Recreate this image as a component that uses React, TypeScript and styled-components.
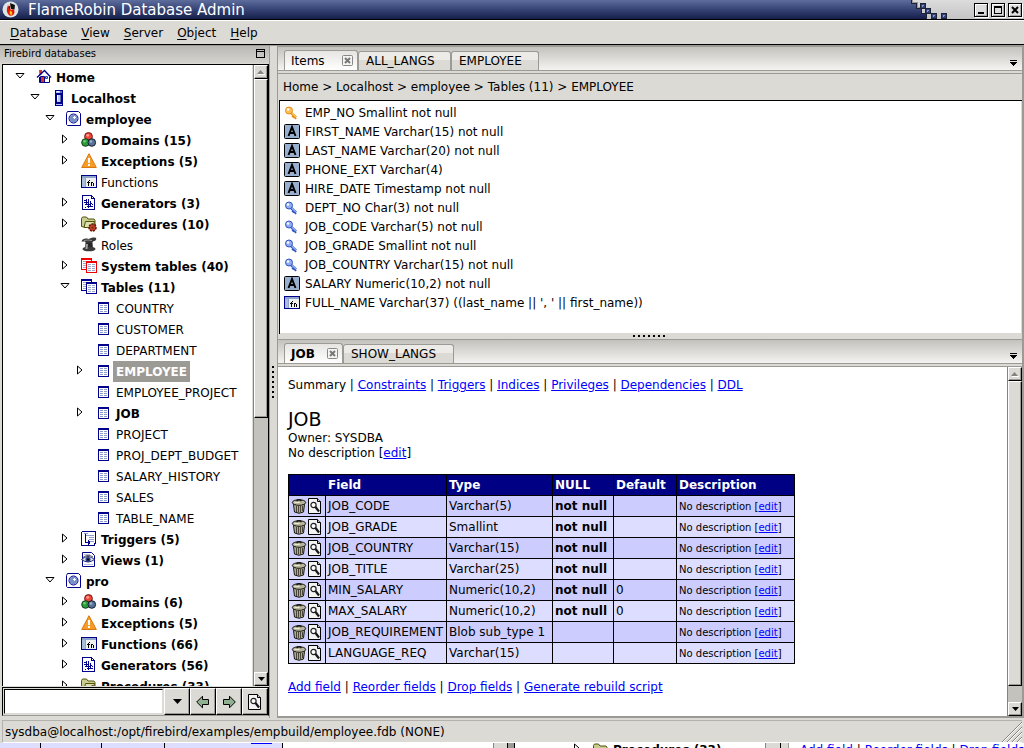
import React from "react";
import styled, { createGlobalStyle, css } from "styled-components";

const face = "#dcdad5";
const shade = "#9c9a94";
const trough = "#c4c2bd";

const GlobalStyle = createGlobalStyle`
  * { box-sizing: border-box; }
  html, body { margin: 0; padding: 0; }
  body {
    background: ${face};
    color: #000;
    font-family: "DejaVu Sans", Verdana, sans-serif;
    font-size: 12px;
    line-height: 15px;
  }
  button, input { font: inherit; color: inherit; margin: 0; padding: 0; border: 0; border-radius: 0; background: none; outline: 0; }
  svg { display: block; flex: none; }
  a { color: #0000ff; }
`;

/* ---------- window frame ---------- */

const Window = styled.div`
  display: flex;
  flex-direction: column;
  height: 100vh;
  overflow: hidden;
`;

const TitleBar = styled.header`
  flex: none;
  display: flex;
  align-items: center;
  height: 20px;
  padding-left: 2px;
  border-bottom: 1px solid #000;
  background: linear-gradient(#5d6d9c, #3a4779 45%, #161f4a);
  color: #fff;
`;

const Title = styled.h1`
  flex: 1;
  margin: 0;
  padding-left: 9px;
  font-size: 15px;
  font-weight: 400;
  line-height: 18px;
`;

const WindowButtons = styled.div`
  display: flex;
  align-items: center;
  gap: 3px;
  height: 19px;
  padding: 0 2px 0 23px;
  background: linear-gradient(#dcdcdc, #c4c4c4);
`;

const WindowButton = styled.button`
  display: grid;
  place-items: center;
  width: 14px;
  height: 14px;
  border: 1px solid #000;
  box-shadow: inset 1px 1px #fff, inset -1px -1px #aaa, 1px 1px #fff;
  background: #dedede;
`;

const MenuBar = styled.nav`
  flex: none;
  display: flex;
  height: 25px;
  padding: 0 3px;
  border-top: 1px solid #fff;
  border-bottom: 1px solid #000;
  background: ${face};
`;

const MenuItem = styled.button`
  padding: 1px 7px 0 7px;
  line-height: 22px;
  & u { text-underline-offset: 2px; }
`;

const Workspace = styled.main`
  flex: 1;
  min-height: 0;
  display: flex;
  border-top: 1px solid ${shade};
`;

/* ---------- scroll bars ---------- */

const ScrollTrack = styled.div`
  flex: none;
  display: flex;
  flex-direction: column;
  width: 15px;
  border-left: 1px solid #85837e;
  background: ${trough};
`;

const raised = css`
  border: 1px solid;
  border-color: #fff #000 #000 #fff;
  box-shadow: inset -1px -1px ${shade};
  background: ${face};
`;

const ScrollButton = styled.button`
  ${raised}
  flex: none;
  display: grid;
  place-items: center;
  height: 14px;
`;

const ScrollThumb = styled.div<{ $share: number }>`
  ${raised}
  flex: ${(p) => p.$share} 0 0;
`;

const ScrollRest = styled.div<{ $share: number }>`
  flex: ${(p) => p.$share} 0 0;
`;

function ScrollBar({ thumb, label }: { thumb: number; label: string }) {
  return (
    <ScrollTrack>
      <ScrollButton aria-label={`${label}: scroll up`}>
        <svg width="8" height="5" viewBox="0 0 8 5"><path d="M0 4 3.5 0 7 4z" fill="#85837e" /><path d="M1 4.5h7" stroke="#fff" /></svg>
      </ScrollButton>
      <ScrollThumb $share={thumb} />
      <ScrollRest $share={100 - thumb} />
      <ScrollButton aria-label={`${label}: scroll down`}>
        <svg width="7" height="4" viewBox="0 0 7 4"><path d="M0 0h7L3.5 4z" /></svg>
      </ScrollButton>
    </ScrollTrack>
  );
}

/* ---------- icons ---------- */

const icon = { width: 16, height: 16, viewBox: "0 0 16 16" };
const crisp = { ...icon, shapeRendering: "crispEdges" as const };

const icons = {
  home: (
    <svg {...icon}>
      <path d="M3 7 8.500 2 13.500 7v6.500h-10z" fill="#fff" />
      <path d="M3 1h3v4L3.500 7z" fill="#d83820" />
      <path d="M5 8h3v5H5z" fill="#d83820" />
      <path d="M3.500 8v5.500h10V8M8.500 13V7.500h-4V13" fill="none" stroke="#00008c" />
      <path d="M1 8.500 8.500 1.500 15 8.500" fill="none" stroke="#00008c" strokeWidth="1.300" />
      <path d="M9.500 7.500h2v2h-2z" fill="#a8c0e8" stroke="#2c489c" />
    </svg>
  ),
  server: (
    <svg {...crisp}>
      <path d="M4 0h8v4h-1v9h1v3H4v-3h1V4H4z" fill="#00008c" />
      <path d="M4 3h1v10H4zM11 3h1v10h-1z" fill="#00008c" />
      <path d="M5 1h6v2H5zM6 5h4v7H6zM5 14h6v1H5z" fill="#b8c8f0" />
      <path d="M9 5h1v7H9zM9 1h2v2H9z" fill="#5870b8" />
      <path d="M6 1h2v1H6zM6 5h1v6H6z" fill="#fff" />
    </svg>
  ),
  database: (
    <svg {...icon}>
      <path d="M1.500.500h11l2 2v12h-13l-1-1v-11z" fill="#fff" stroke="#00008c" />
      <circle cx="7.500" cy="7.500" r="4.500" fill="#c8d4f0" stroke="#00008c" />
      <circle cx="7.500" cy="7.500" r="3.800" fill="#7890c8" />
      <path d="M7 6.500h3M8.500 5v3" stroke="#fff" />
    </svg>
  ),
  domains: (
    <svg {...icon}>
      <circle cx="7.500" cy="4.500" r="3.900" fill="#ee4638" stroke="#701812" />
      <circle cx="4.500" cy="10.500" r="3.800" fill="#28a038" stroke="#103c18" />
      <circle cx="10.800" cy="10.500" r="3.800" fill="#587294" stroke="#101c30" />
      <circle cx="6.700" cy="3.300" r="1.400" fill="#ff9c90" />
      <circle cx="3.500" cy="9.300" r="1.200" fill="#70d078" />
      <circle cx="10" cy="9.500" r="1.200" fill="#9cb4d0" />
    </svg>
  ),
  exceptions: (
    <svg {...icon}>
      <path d="M8 .700 15.300 14.500H.7z" fill="#f89c28" stroke="#d87810" strokeLinejoin="round" />
      <path d="M8 5v5M8 11v2" stroke="#fff" strokeWidth="2" />
    </svg>
  ),
  fn: (
    <svg {...crisp}>
      <path d="M0 1h16v13H0z" fill="#00008c" />
      <path d="M1 2h14v11H1z" fill="#8ca4cc" />
      <path d="M1 4h3v9H1z" fill="#a8bcdc" />
      <path d="M5 4h10v9H5z" fill="#f0f0ee" />
      <path d="M7.500 7v5M6 8.500h3M8 6.500h1M10.500 8v4M11 8.500h1M12.500 9v3" stroke="#000" fill="none" />
    </svg>
  ),
  generators: (
    <svg {...crisp}>
      <path d="M1.500.500h9l3 3v11h-12z" fill="#fff" stroke="#00008c" />
      <path d="M10.500 0v3.500H14" fill="none" stroke="#00008c" />
      <path d="M3 5h2v1H3zM5 4h1v5H5zM3 7h5v1H3zM7 4h1v5H7zM4 9h6v1H4zM7 8h1v5H7zM9 6h1v6H9zM6 11h6v1H6zM9 8h2v1H9zM11 9h1v1h-1zM4 12h1v1H4z" fill="#00008c" />
    </svg>
  ),
  procedures: (
    <svg {...icon}>
      <path d="M.500 10.500v-8l1-1.500h4l1.500 2h6l1 1.500V11H3z" fill="#c8cc90" stroke="#505408" />
      <path d="m3 11.500 1.500-6h9L12 11.500z" fill="#dce0b0" stroke="#505408" />
      <circle cx="11.500" cy="11.500" r="3.500" fill="#c04028" stroke="#601808" strokeWidth="1.600" strokeDasharray="2 1" />
      <circle cx="11.500" cy="11.500" r="1" fill="#802010" />
    </svg>
  ),
  roles: (
    <svg {...icon}>
      <path d="M.500 4.500c1-3 4-3.500 7-2.500C10 1 13 0 15 1c1 2-1 3-3 3.500l-1 2H5l-1-2z" fill="#383838" />
      <path d="M3 3.500q4-1 8 0" stroke="#909090" fill="none" />
      <path d="M4.500 6h7l.500 6h-8z" fill="#282828" />
      <ellipse cx="8" cy="12" rx="6.500" ry="2.300" fill="#3c3c3c" />
      <path d="M5 7 4.500 12h2L7 7z" fill="#a0a0a0" />
    </svg>
  ),
  systemTables: <StackedTables color="#f00000" />,
  tables: <StackedTables color="#00008c" />,
  table: (
    <svg {...crisp}>
      <path d="M2 2h11v12H2z" fill="#00008c" />
      <path d="M3 4h9v9H3z" fill="#fff" />
      <path d="M4 5.500h7M4 7.500h7M4 9.500h7M4 11.500h7" stroke="#8c9cc8" strokeDasharray="3 1" />
    </svg>
  ),
  triggers: (
    <svg {...crisp}>
      <path d="M1.500.500h13v12h-1v2H.500v-13z" fill="#fff" stroke="#00008c" />
      <path d="M3 2.500h4M5 4.500h8M8 6.500h5M8 8.500h5M9 10.500h4" stroke="#8c9cd0" />
      <path d="M4.500 3v8.500H9M7.500 9v5M8.500 10v3" stroke="#00008c" fill="none" />
    </svg>
  ),
  views: (
    <svg {...icon}>
      <path d="M1.500.500h9l3 3v11h-12z" fill="#fff" stroke="#00008c" />
      <path d="M3 2.500h6M3 12.500h9" stroke="#b0bce0" />
      <path d="M.500 7.500Q7 1.500 13.500 7.500 7 12.500 .500 7.500z" fill="#d8dcec" stroke="#283070" />
      <circle cx="7" cy="7.500" r="2.500" fill="#283c80" /><circle cx="7" cy="7.500" r="1" fill="#000" />
      <path d="M2 5.500Q7 1.500 12 5" stroke="#585858" fill="none" />
    </svg>
  ),
  key: <Key light="#ffc058" dark="#e88c10" />,
  foreignKey: <Key light="#90acf4" dark="#3054c0" />,
  column: (
    <svg {...icon}>
      <rect x=".500" y=".500" width="15" height="14" rx="1" fill="#98b0d0" stroke="#000" />
      <path d="M4.500 12 8 3l3.500 9M6 9h4" stroke="#000" strokeWidth="2" fill="none" />
    </svg>
  ),
};

type IconName = keyof typeof icons;

function StackedTables({ color }: { color: string }) {
  return (
    <svg {...crisp}>
      <path d="M0 0h11v12H0z" fill={color} /><path d="M1 2h9v9H1z" fill="#fff" />
      <path d="M2 3.500h7M2 5.500h7M2 7.500h7M2 9.500h7" stroke="#98a4cc" strokeDasharray="3 1" />
      <path d="M5 3h11v12H5z" fill={color} /><path d="M6 5h9v9H6z" fill="#fff" />
      <path d="M7 6.500h7M7 8.500h7M7 10.500h7M7 12.500h7" stroke="#98a4cc" strokeDasharray="3 1" />
    </svg>
  );
}

function Key({ light, dark }: { light: string; dark: string }) {
  return (
    <svg {...icon}>
      <path d="m6 7 6 5.500M10 10.500l-1.500 1.800M12 12.500l-1.500 1" stroke={dark} strokeWidth="2.600" />
      <path d="m6 6.500 6 5.500" stroke={light} strokeWidth="1.500" />
      <circle cx="5" cy="5.500" r="3.500" fill={light} stroke={dark} />
      <circle cx="4" cy="4.500" r="1.200" fill="#fff" />
    </svg>
  );
}

const TrashIcon = () => (
  <svg {...icon}>
    <path d="M2.500 6.500h11l-1 7.500q-4.500 2.500-9 0z" fill="#b0ac94" stroke="#181810" />
    <path d="M5.500 8v6M7.500 8v6.500M9.500 8v6.500M11.500 8v5" stroke="#484438" />
    <ellipse cx="8" cy="4.500" rx="6.700" ry="2.800" fill="#b8b49c" stroke="#181810" />
    <path d="M5.500 3Q8 .500 10.500 3" fill="none" stroke="#181810" strokeWidth="1.500" />
    <path d="M3.500 4.500h5" stroke="#ecead8" />
  </svg>
);

const FindIcon = () => (
  <svg {...icon}>
    <path d="M1.500.500h9l3 3v12h-12z" fill="#f4f4f4" stroke="#000" />
    <path d="M10.500.500v3h3" fill="#c8c8c8" stroke="#000" />
    <circle cx="6.500" cy="7" r="2.600" fill="#fff" stroke="#202020" strokeWidth="1.200" />
    <path d="m8.500 9 3.500 4.500" stroke="#181818" strokeWidth="2.200" />
  </svg>
);

const RobinIcon = () => (
  <svg width="17" height="17" viewBox="0 0 17 17">
    <circle cx="8.500" cy="8.500" r="8" fill="#dce4e4" />
    <path d="M8 2 13 4 12.500 8.500 9 8z" fill="#101010" />
    <path d="M6 4c-1 3-2.500 7 1.500 10.500 5 1 6-4 4-6.500L9 9z" fill="#e81808" />
    <path d="M8.500 9.500c-1.500 1.500-1 4 .500 4.500 2-.500 1.500-3-.500-4.500z" fill="#ffc810" />
    <path d="M6.500 6 8 8.500 8.500 4z" fill="#501010" />
  </svg>
);

const TitleDither = () => (
  <svg width="44" height="19" viewBox="0 0 44 19" shapeRendering="crispEdges">
    <defs>
      <linearGradient id="frameLight" x1="0" y1="0" x2="0" y2="1">
        <stop offset="0" stopColor="#dcdcdc" /><stop offset="1" stopColor="#c4c4c4" />
      </linearGradient>
    </defs>
    <path d="M4 0h40v19H19v-5h-5V8H9V3H4z" fill="url(#frameLight)" />
    <path d="M4.500 0v3.500h5v5h5v5h5V19" fill="none" stroke="#1c2238" />
    <path d="M5.500 0v2.500h5v5h3" fill="none" stroke="#9a9a9a" />
    <path d="M13.500 3.500h5v5h-5zM18.500 8.500h5v5h-5zM24.500 13.500h5v5h-5zM34.500 13.500h5v5h-5z" fill="#32407a" stroke="#1c2238" />
    <path d="M15 7V5h2M20 12v-2h2M26 17v-2h2M36 17v-2h2" fill="none" stroke="#8c9cc4" />
  </svg>
);

const ChevronBar = () => (
  <svg width="8" height="6" viewBox="0 0 8 6" shapeRendering="crispEdges"><path d="M0 0h7v1H0zM0 2h7v1H6v1H5v1H4v1H3V5H2V4H1V3H0z" /></svg>
);

/* ---------- left: database tree ---------- */

const SidePane = styled.aside`
  flex: none;
  display: flex;
  flex-direction: column;
  width: 270px;
  padding: 0 0 2px 2px;
  border-right: 1px solid ${shade};
`;

const PaneCaption = styled.div`
  flex: none;
  display: flex;
  align-items: center;
  justify-content: space-between;
  height: 18px;
  margin-left: -2px;
  padding: 0 4px 2px;
  border-bottom: 1px solid ${face};
  background: linear-gradient(#bab9b5, #d4d2cd);
  font-size: 10px;
`;

const TreeFrame = styled.div`
  flex: 1;
  min-height: 0;
  display: flex;
  border: 1px solid #000;
  border-width: 1px 1px 0 1px;
  background: #fff;
`;

const Tree = styled.ul`
  flex: 1;
  min-width: 0;
  margin: 0;
  padding: 2px 0 0;
  overflow: hidden;
  list-style: none;
  border-right: 1px solid ${face};
`;

const TreeRow = styled.li<{ $depth: number }>`
  display: flex;
  height: 21px;
  padding-left: ${(p) => 9 + 15 * p.$depth}px;
  & > svg { margin-top: 2px; }
`;

const Expander = styled.button`
  display: grid;
  place-items: center;
  flex: none;
  width: 16px;
  height: 17px;
  margin-right: 8px;
`;

const NodeLabel = styled.span<{ $bold?: boolean; $selected?: boolean }>`
  margin-left: 1px;
  padding: 1px 3px 0;
  line-height: 20px;
  white-space: nowrap;
  font-weight: ${(p) => (p.$bold ? 700 : 400)};
  ${(p) => p.$selected && css`background: #9c9a94; color: #fff;`}
`;

type Node = { depth: number; icon: IconName; label: string; bold?: boolean; open?: boolean; branch?: boolean; selected?: boolean };

const leaf = (label: string): Node => ({ depth: 4, icon: "table", label });
const group = (icon: IconName, label: string, open = false): Node => ({ depth: 3, icon, label, bold: true, branch: true, open });

const nodes: Node[] = [
  { depth: 0, icon: "home", label: "Home", bold: true, branch: true, open: true },
  { depth: 1, icon: "server", label: "Localhost", bold: true, branch: true, open: true },
  { depth: 2, icon: "database", label: "employee", bold: true, branch: true, open: true },
  group("domains", "Domains (15)"),
  group("exceptions", "Exceptions (5)"),
  { depth: 3, icon: "fn", label: "Functions" },
  group("generators", "Generators (3)"),
  group("procedures", "Procedures (10)"),
  { depth: 3, icon: "roles", label: "Roles" },
  group("systemTables", "System tables (40)"),
  group("tables", "Tables (11)", true),
  leaf("COUNTRY"),
  leaf("CUSTOMER"),
  leaf("DEPARTMENT"),
  { ...leaf("EMPLOYEE"), bold: true, branch: true, selected: true },
  leaf("EMPLOYEE_PROJECT"),
  { ...leaf("JOB"), bold: true, branch: true },
  leaf("PROJECT"),
  leaf("PROJ_DEPT_BUDGET"),
  leaf("SALARY_HISTORY"),
  leaf("SALES"),
  leaf("TABLE_NAME"),
  group("triggers", "Triggers (5)"),
  group("views", "Views (1)"),
  { depth: 2, icon: "database", label: "pro", bold: true, branch: true, open: true },
  group("domains", "Domains (6)"),
  group("exceptions", "Exceptions (5)"),
  group("fn", "Functions (66)"),
  group("generators", "Generators (56)"),
  group("procedures", "Procedures (33)"),
];

const SearchRow = styled.form`
  flex: none;
  display: flex;
  height: 29px;
  margin-top: 1px;
  border: 1px solid #000;
  border-bottom-color: ${shade};
  background: ${face};
`;

const SearchBox = styled.input`
  flex: 1;
  min-width: 0;
  margin: 1px;
  padding: 0 4px;
  border: 1px solid #000;
  border-color: #000 ${face} ${face} #000;
  background: #fff;
`;

const ToolButton = styled.button`
  ${raised}
  display: grid;
  place-items: center;
  width: 26px;
`;

/* ---------- right: notebooks ---------- */

const Sash = styled.div<{ $vertical?: boolean }>`
  flex: none;
  display: grid;
  place-items: center;
  ${(p) => (p.$vertical ? "width: 7px;" : "height: 5px;")}
  background: ${face};
`;

const Notebooks = styled.div`
  flex: 1;
  min-width: 0;
  display: flex;
  flex-direction: column;
  border: 1px solid ${shade};
  border-width: 0 2px 2px 1px;
`;

const Notebook = styled.section<{ $fill?: boolean }>`
  display: flex;
  flex-direction: column;
  ${(p) => (p.$fill ? "flex: 1; min-height: 0;" : "flex: none; height: 288px;")}
`;

const TabBar = styled.div`
  flex: none;
  display: flex;
  align-items: flex-end;
  height: 25px;
  padding-left: 6px;
  border-top: 1px solid ${shade};
  border-bottom: 1px solid ${shade};
  background: linear-gradient(#c4c2bd, #f4f3f1);
`;

const Tab = styled.button<{ $active?: boolean; $width: number }>`
  display: flex;
  align-items: center;
  justify-content: space-between;
  width: ${(p) => p.$width}px;
  height: ${(p) => (p.$active ? 20 : 19)}px;
  padding: 1px 3px 0 ${(p) => (p.$active ? 6 : 7)}px;
  border: 1px solid ${shade};
  border-bottom: 0;
  border-radius: 3px 3px 0 0;
  background: ${(p) => (p.$active ? "linear-gradient(#e6e5e2, #fff)" : "linear-gradient(#ecebe8 45%, #dcdad5 45%)")};
`;

const TabMenu = styled.button`
  width: 12px;
  height: 15px;
  margin-left: auto;
`;

const CloseIcon = () => (
  <svg width="12" height="12" viewBox="0 0 12 12"><rect x=".500" y=".500" width="10" height="10" rx="1" fill="#f4f4f2" stroke="#888" /><path d="m3 3 5 5M8 3 3 8" stroke="#777" strokeWidth="2" /></svg>
);

const TabLine = styled.div`
  flex: none;
  height: 3px;
  border-bottom: 1px solid ${shade};
  background: ${face};
`;

const Breadcrumb = styled.div`
  flex: none;
  height: 26px;
  padding: 0 5px;
  line-height: 26px;
`;

const ColumnList = styled.ul`
  flex: 1;
  margin: 0 0 0 1px;
  padding: 3px 4px;
  overflow: hidden;
  list-style: none;
  border: 1px solid #000;
  border-width: 1px 0 0 1px;
  box-shadow: inset -1px -1px ${face};
  background: #fff;
`;

const ColumnItem = styled.li`
  display: flex;
  gap: 5px;
  height: 19px;
  line-height: 19px;
  & > svg { margin-top: 1px; }
`;

const Report = styled.div`
  flex: 1;
  min-height: 0;
  display: flex;
  background: #fff;
`;

const ReportBody = styled.article`
  flex: 1;
  min-width: 0;
  padding: 11px 10px 10px;
  overflow: hidden;
`;

const LinkLine = styled.p`
  margin: 0;
`;

const Heading = styled.h2`
  margin: 14px 0 0;
  font-size: 19px;
  font-weight: 400;
  line-height: 24px;
`;

const FieldTable = styled.table`
  margin: 13px 0 16px;
  border-collapse: collapse;
  td, th {
    height: 21px;
    padding: 0 2px;
    border: 1px solid #000;
    text-align: left;
    white-space: nowrap;
  }
  th { background: #000084; color: #fff; }
  tbody tr:nth-child(odd) { background: #ccccff; }
  tbody tr:nth-child(even) { background: #ddddff; }
`;

const Col = styled.col<{ $width: number }>`
  width: ${(p) => p.$width}px;
`;

const Actions = styled.div`
  display: flex;
`;

const SmallCell = styled.td`
  font-size: 10px;
`;

const columns: [IconName, string][] = [
  ["key", "EMP_NO Smallint not null"],
  ["column", "FIRST_NAME Varchar(15) not null"],
  ["column", "LAST_NAME Varchar(20) not null"],
  ["column", "PHONE_EXT Varchar(4)"],
  ["column", "HIRE_DATE Timestamp not null"],
  ["foreignKey", "DEPT_NO Char(3) not null"],
  ["foreignKey", "JOB_CODE Varchar(5) not null"],
  ["foreignKey", "JOB_GRADE Smallint not null"],
  ["foreignKey", "JOB_COUNTRY Varchar(15) not null"],
  ["column", "SALARY Numeric(10,2) not null"],
  ["fn", "FULL_NAME Varchar(37) ((last_name || ', ' || first_name))"],
];

const fields: [string, string, boolean, string][] = [
  ["JOB_CODE", "Varchar(5)", true, ""],
  ["JOB_GRADE", "Smallint", true, ""],
  ["JOB_COUNTRY", "Varchar(15)", true, ""],
  ["JOB_TITLE", "Varchar(25)", true, ""],
  ["MIN_SALARY", "Numeric(10,2)", true, "0"],
  ["MAX_SALARY", "Numeric(10,2)", true, "0"],
  ["JOB_REQUIREMENT", "Blob sub_type 1", false, ""],
  ["LANGUAGE_REQ", "Varchar(15)", false, ""],
];

const Links = ({ items }: { items: string[] }) => (
  <>
    {items.map((item, i) => (
      <React.Fragment key={item}>{i > 0 && " | "}<a href="#">{item}</a></React.Fragment>
    ))}
  </>
);

/* ---------- bottom ---------- */

const StatusBar = styled.footer`
  flex: none;
  display: flex;
  justify-content: space-between;
  align-items: flex-end;
  height: 23px;
  margin: 2px 2px 0;
  padding-left: 2px;
  border-top: 1px solid #b4b2ad;
  border-left: 1px solid #b4b2ad;
  border-bottom: 1px solid #fff;
  line-height: 20px;
`;

/* A sliver of the window lying behind this one */
const Behind = styled.div`
  flex: none;
  display: flex;
  height: 5px;
  overflow: hidden;
`;

const BehindCell = styled.div<{ $width?: number; $bg: string; $edge?: string; $end?: boolean }>`
  display: flex;
  align-items: flex-start;
  justify-content: ${(p) => (p.$end ? "flex-end" : "flex-start")};
  ${(p) => (p.$width ? `flex: none; width: ${p.$width}px;` : "flex: 1; min-width: 0;")}
  overflow: hidden;
  white-space: nowrap;
  background: ${(p) => p.$bg};
  border-right: ${(p) => (p.$edge ? `1px solid ${p.$edge}` : "0")};
`;

const UnderlineTail = styled.span`
  width: 21px;
  height: 1px;
  margin-right: 10px;
  background: #0000ff;
`;

const BehindLabel = styled.span<{ $bold?: boolean }>`
  padding: 0 ${(p) => (p.$bold ? 4 : 11)}px;
  font-weight: ${(p) => (p.$bold ? 700 : 400)};
`;

export default function App() {
  return (
    <Window>
      <GlobalStyle />
      <TitleBar>
        <RobinIcon />
        <Title>FlameRobin Database Admin</Title>
        <TitleDither />
        <WindowButtons>
          <WindowButton aria-label="Minimize"><svg width="8" height="8" viewBox="0 0 8 8"><path d="M1 6h6v2H1z" /></svg></WindowButton>
          <WindowButton aria-label="Maximize"><svg width="8" height="8" viewBox="0 0 8 8"><path d="M0 0h8v8H0zM1 2v5h6V2z" fillRule="evenodd" /></svg></WindowButton>
          <WindowButton aria-label="Close"><svg width="8" height="8" viewBox="0 0 8 8"><path d="m1 1 6 6M7 1 1 7" stroke="#000" strokeWidth="2" /></svg></WindowButton>
        </WindowButtons>
      </TitleBar>
      <MenuBar>
        {["Database", "View", "Server", "Object", "Help"].map((m) => (
          <MenuItem key={m}><u>{m[0]}</u>{m.slice(1)}</MenuItem>
        ))}
      </MenuBar>

      <Workspace>
        <SidePane>
          <PaneCaption>
            Firebird databases
            <svg width="9" height="9" viewBox="0 0 9 9" shapeRendering="crispEdges"><path d="M.500.500h8v8h-8zM0 2.500h9" fill="none" stroke="#000" /></svg>
          </PaneCaption>
          <TreeFrame>
            <Tree>
              {nodes.map((n, i) => (
                <TreeRow key={i} $depth={n.depth}>
                  <Expander aria-label={n.branch ? `Toggle ${n.label}` : undefined} disabled={!n.branch}>
                    {n.branch && (
                      n.open
                        ? <svg width="10" height="6" viewBox="0 0 10 6"><path d="M1 .500h8L5 5z" fill="#fff" stroke="#000" /></svg>
                        : <svg width="6" height="10" viewBox="0 0 6 10"><path d="M.500 1v8L5 5z" fill="#fff" stroke="#000" /></svg>
                    )}
                  </Expander>
                  {icons[n.icon]}
                  <NodeLabel $bold={n.bold} $selected={n.selected}>{n.label}</NodeLabel>
                </TreeRow>
              ))}
            </Tree>
            <ScrollBar thumb={57} label="Databases" />
          </TreeFrame>
          <SearchRow>
            <SearchBox aria-label="Search" />
            <ToolButton type="button" aria-label="Recent searches"><svg width="9" height="5" viewBox="0 0 9 5"><path d="M0 0h9L4.500 5z" /></svg></ToolButton>
            <ToolButton type="button" aria-label="Previous"><svg width="14" height="14" viewBox="0 0 14 14"><path d="M.700 7 6.500 1.200V4.500h6v5h-6v3.300z" fill="#90b090" stroke="#000" /></svg></ToolButton>
            <ToolButton type="button" aria-label="Next"><svg width="14" height="14" viewBox="0 0 14 14"><path d="M13.300 7 7.500 1.200V4.500h-6v5h6v3.300z" fill="#90b090" stroke="#000" /></svg></ToolButton>
            <ToolButton type="button" aria-label="Advanced search"><FindIcon /></ToolButton>
          </SearchRow>
        </SidePane>

        <Sash $vertical>
          <svg width="3" height="32" viewBox="0 0 3 32" shapeRendering="crispEdges"><path d="M1 0v32" stroke="#000" strokeWidth="2" strokeDasharray="2 3" /></svg>
        </Sash>

        <Notebooks>
          <Notebook>
            <TabBar>
              <Tab $active $width={74}>Items<CloseIcon /></Tab>
              <Tab $width={93}>ALL_LANGS</Tab>
              <Tab $width={88}>EMPLOYEE</Tab>
              <TabMenu aria-label="List tabs"><ChevronBar /></TabMenu>
            </TabBar>
            <TabLine />
            <Breadcrumb>Home &gt; Localhost &gt; employee &gt; Tables (11) &gt; EMPLOYEE</Breadcrumb>
            <ColumnList>
              {columns.map(([name, text]) => (
                <ColumnItem key={text}>{icons[name]}{text}</ColumnItem>
              ))}
            </ColumnList>
          </Notebook>

          <Sash>
            <svg width="34" height="3" viewBox="0 0 34 3" shapeRendering="crispEdges"><path d="M0 1h34" stroke="#000" strokeWidth="2" strokeDasharray="2 3" /></svg>
          </Sash>

          <Notebook $fill>
            <TabBar>
              <Tab $active $width={59}><b>JOB</b><CloseIcon /></Tab>
              <Tab $width={111}>SHOW_LANGS</Tab>
              <TabMenu aria-label="List tabs"><ChevronBar /></TabMenu>
            </TabBar>
            <TabLine />
            <Report>
              <ReportBody>
                <LinkLine>Summary | <Links items={["Constraints", "Triggers", "Indices", "Privileges", "Dependencies", "DDL"]} /></LinkLine>
                <Heading>JOB</Heading>
                <LinkLine>Owner: SYSDBA</LinkLine>
                <LinkLine>No description [<a href="#">edit</a>]</LinkLine>
                <FieldTable>
                  <colgroup>
                    <Col $width={37} /><Col $width={121} /><Col $width={106} /><Col $width={61} /><Col $width={63} /><Col $width={118} />
                  </colgroup>
                  <thead>
                    <tr><th aria-label="Actions" /><th>Field</th><th>Type</th><th>NULL</th><th>Default</th><th>Description</th></tr>
                  </thead>
                  <tbody>
                    {fields.map(([name, type, notNull, def]) => (
                      <tr key={name}>
                        <td>
                          <Actions>
                            <a href="#" aria-label={`Drop ${name}`}><TrashIcon /></a>
                            <a href="#" aria-label={`Properties of ${name}`}><FindIcon /></a>
                          </Actions>
                        </td>
                        <td>{name}</td>
                        <td>{type}</td>
                        <td><b>{notNull ? "not null" : ""}</b></td>
                        <td>{def}</td>
                        <SmallCell>No description [<a href="#">edit</a>]</SmallCell>
                      </tr>
                    ))}
                  </tbody>
                </FieldTable>
                <LinkLine><Links items={["Add field", "Reorder fields", "Drop fields", "Generate rebuild script"]} /></LinkLine>
              </ReportBody>
              <ScrollBar thumb={95} label="Report" />
            </Report>
          </Notebook>
        </Notebooks>
      </Workspace>

      <StatusBar>
        sysdba@localhost:/opt/firebird/examples/empbuild/employee.fdb (NONE)
        <svg width="20" height="20" viewBox="0 0 20 20">
          <path d="M1 20 20 1M6 20 20 6M11 20l9-9M16 20l4-4" stroke="#fff" />
          <path d="M0 20 20 0M5 20 20 5M10 20l10-10M15 20l5-5" stroke="#85837e" />
        </svg>
      </StatusBar>

      <Behind aria-hidden="true">
        <BehindCell $width={41} $bg="#ddddff" $edge="#000" />
        <BehindCell $width={61} $bg="#ddddff" $edge="#000" />
        <BehindCell $width={63} $bg="#ddddff" $edge="#000" />
        <BehindCell $width={118} $bg="#ddddff" $edge="#000" $end><UnderlineTail /></BehindCell>
        <BehindCell $width={211} $bg="#fff" $edge="#85837e" />
        <BehindCell $width={14} $bg={face} $edge="#000" />
        <BehindCell $width={7} $bg={shade} $edge="#000" />
        <BehindCell $width={78} $bg="#fff" $end>
          <svg width="20" height="10" viewBox="0 0 20 10"><path d="M1.500 1v8L6 5z" fill="#fff" stroke="#000" /></svg>
        </BehindCell>
        <BehindCell $width={173} $bg="#fff" $edge="#85837e">{icons.procedures}<BehindLabel $bold>Procedures (33)</BehindLabel></BehindCell>
        <BehindCell $width={15} $bg={face} $edge="#000" />
        <BehindCell $width={8} $bg={face} $edge={shade} />
        <BehindCell $bg="#fff"><BehindLabel><Links items={["Add field", "Reorder fields", "Drop fields"]} /></BehindLabel></BehindCell>
      </Behind>
    </Window>
  );
}
